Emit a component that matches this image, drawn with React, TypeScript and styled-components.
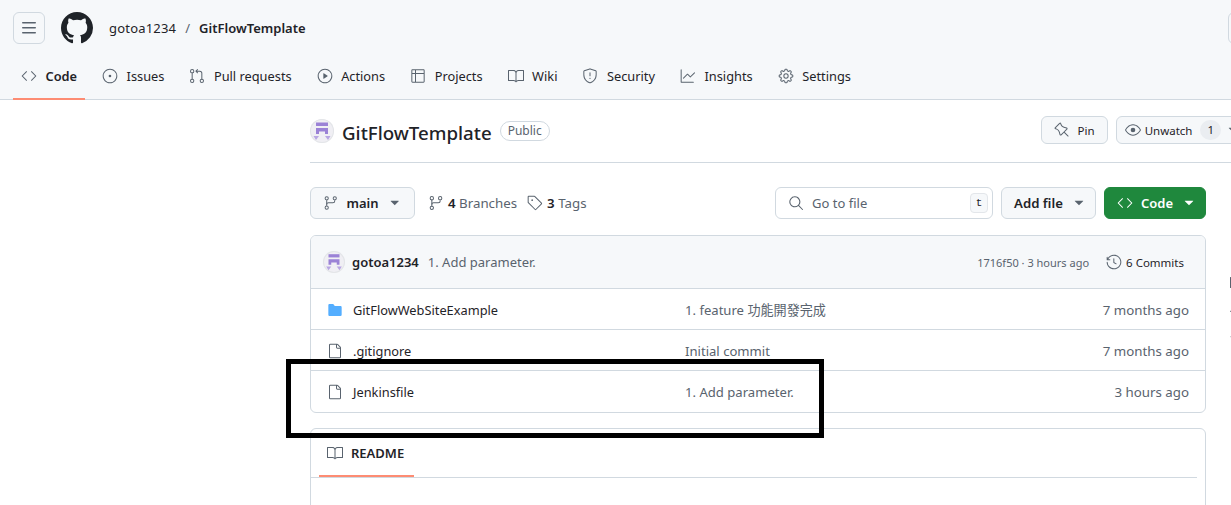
import { ReactNode } from "react";
import styled, { createGlobalStyle } from "styled-components";
import { BsGithub } from "react-icons/bs";
import {
  GoBook,
  GoCode,
  GoEye,
  GoFile,
  GoFileDirectoryFill,
  GoGear,
  GoGitBranch,
  GoGitPullRequest,
  GoGraph,
  GoHistory,
  GoIssueOpened,
  GoPin,
  GoPlay,
  GoPulse,
  GoSearch,
  GoShield,
  GoStar,
  GoTable,
  GoTag,
  GoTriangleDown,
} from "react-icons/go";

const GlobalStyle = createGlobalStyle`
  html, body {
    margin: 0;
    padding: 0;
    background: #fff;
    overflow: hidden;
  }
  body {
    font-family: "Noto Sans", "Noto Sans CJK TC", sans-serif;
    font-size: 13px;
    color: #1f2328;
  }
`;

const tabs: { label: string; icon: ReactNode; active?: boolean }[] = [
  { label: "Code", icon: <GoCode size={16} />, active: true },
  { label: "Issues", icon: <GoIssueOpened size={16} /> },
  { label: "Pull requests", icon: <GoGitPullRequest size={16} /> },
  { label: "Actions", icon: <GoPlay size={16} /> },
  { label: "Projects", icon: <GoTable size={16} /> },
  { label: "Wiki", icon: <GoBook size={16} /> },
  { label: "Security", icon: <GoShield size={16} /> },
  { label: "Insights", icon: <GoGraph size={16} /> },
  { label: "Settings", icon: <GoGear size={16} /> },
];

const files = [
  { name: "GitFlowWebSiteExample", dir: true, message: "1. feature 功能開發完成", age: "7 months ago" },
  { name: ".gitignore", dir: false, message: "Initial commit", age: "7 months ago" },
  { name: "Jenkinsfile", dir: false, message: "1. Add parameter.", age: "3 hours ago" },
];

const Identicon = ({ size }: { size: number }) => (
  <Avatar $size={size}>
    <svg viewBox="0 0 24 24" width={size} height={size}>
      <rect x="6" y="3.5" width="12" height="3.5" fill="#9b82d6" />
      <path d="M6 9h12v6h-3v-2.5H9V15H6z" fill="#9b82d6" />
      <path d="M3.5 17H9l-3 4zM15 17h5.5L18 21z" fill="#b8a6e3" />
    </svg>
  </Avatar>
);

const MenuIcon = () => (
  <svg viewBox="0 0 16 16" width={16} height={16} fill="currentColor">
    <path d="M1 2.75A.75.75 0 0 1 1.75 2h12.5a.75.75 0 0 1 0 1.5H1.75A.75.75 0 0 1 1 2.75Zm0 5A.75.75 0 0 1 1.75 7h12.5a.75.75 0 0 1 0 1.5H1.75A.75.75 0 0 1 1 7.75ZM1.75 12h12.5a.75.75 0 0 1 0 1.5H1.75a.75.75 0 0 1 0-1.5Z" />
  </svg>
);

export default function App() {
  return (
    <Page>
      <GlobalStyle />
      <Header>
        <TopRow>
          <MenuButton>
            <MenuIcon />
          </MenuButton>
          <Logo>
            <BsGithub size={32} />
          </Logo>
          <Crumbs>
            <Owner>gotoa1234</Owner>
            <Slash>/</Slash>
            <strong>GitFlowTemplate</strong>
          </Crumbs>
          <CornerButton />
        </TopRow>
        <TabBar>
          {tabs.map((tab) => (
            <Tab key={tab.label} $active={tab.active}>
              {tab.icon}
              <span>{tab.label}</span>
            </Tab>
          ))}
        </TabBar>
      </Header>

      <Main>
        <RepoHead>
          <RepoTitle>
            <Identicon size={24} />
            <RepoName>GitFlowTemplate</RepoName>
            <PublicBadge>Public</PublicBadge>
          </RepoTitle>
          <RepoActions>
            <SmallButton>
              <GoPin size={16} />
              Pin
            </SmallButton>
            <WatchButton>
              <GoEye size={16} />
              Unwatch
              <Count>1</Count>
              <GoTriangleDown size={16} />
            </WatchButton>
          </RepoActions>
        </RepoHead>

        <Body>
          <Column>
            <Toolbar>
              <BranchButton>
                <GoGitBranch size={16} />
                <strong>main</strong>
                <GoTriangleDown size={16} />
              </BranchButton>
              <RefLink>
                <GoGitBranch size={16} />
                <span>
                  <b>4</b> Branches
                </span>
              </RefLink>
              <RefLink>
                <GoTag size={16} />
                <span>
                  <b>3</b> Tags
                </span>
              </RefLink>
              <Spacer />
              <SearchBox>
                <GoSearch size={16} />
                <SearchText>Go to file</SearchText>
                <Kbd>t</Kbd>
              </SearchBox>
              <AddButton>
                Add file
                <GoTriangleDown size={16} />
              </AddButton>
              <GreenButton>
                <GoCode size={16} />
                Code
                <GoTriangleDown size={16} />
              </GreenButton>
            </Toolbar>

            <FileTable>
              <CommitRow>
                <Identicon size={22} />
                <Author>gotoa1234</Author>
                <CommitMessage>1. Add parameter.</CommitMessage>
                <Spacer />
                <CommitMeta>1716f50 · 3 hours ago</CommitMeta>
                <Commits>
                  <GoHistory size={16} />
                  6 Commits
                </Commits>
              </CommitRow>
              {files.map((file) => (
                <FileRow key={file.name}>
                  <FileName>
                    <FileIcon $dir={file.dir}>
                      {file.dir ? <GoFileDirectoryFill size={16} /> : <GoFile size={16} />}
                    </FileIcon>
                    {file.name}
                  </FileName>
                  <FileMessage>{file.message}</FileMessage>
                  <FileAge>{file.age}</FileAge>
                </FileRow>
              ))}
            </FileTable>

            <Readme>
              <ReadmeTabs>
                <ReadmeTab>
                  <GoBook size={16} />
                  README
                </ReadmeTab>
              </ReadmeTabs>
            </Readme>
          </Column>

          <Sidebar>
            <GoBook size={16} />
            <GoPulse size={16} />
            <GoStar size={16} />
          </Sidebar>
        </Body>
      </Main>

      <Highlight />
    </Page>
  );
}

const Page = styled.div`
  position: relative;
  width: 1231px;
  height: 505px;
  overflow: hidden;
  background: #fff;
`;

const Header = styled.header`
  height: 100px;
  box-sizing: border-box;
  background: #f6f8fa;
  border-bottom: 1px solid #d1d9e0;
`;

const TopRow = styled.div`
  display: flex;
  align-items: center;
  height: 56px;
  padding-left: 13px;
`;

const MenuButton = styled.div`
  display: flex;
  align-items: center;
  justify-content: center;
  width: 32px;
  height: 32px;
  box-sizing: border-box;
  color: #59636e;
  border: 1px solid #d1d9e0;
  border-radius: 6px;
`;

const Logo = styled.div`
  display: flex;
  margin-left: 16px;
  color: #1f2328;
`;

const Crumbs = styled.div`
  display: flex;
  align-items: center;
  margin-left: 16px;
  font-size: 13px;
  strong {
    font-weight: 600;
  }
`;

const Owner = styled.span`
  letter-spacing: 0.2px;
`;

const Slash = styled.span`
  margin: 0 9px;
  color: #59636e;
`;

const CornerButton = styled.div`
  flex: none;
  width: 32px;
  height: 32px;
  box-sizing: border-box;
  margin-left: auto;
  margin-right: -29px;
  border: 1px solid #d1d9e0;
  border-radius: 6px;
`;

const TabBar = styled.nav`
  display: flex;
  height: 43px;
  padding-left: 13px;
  gap: 9px;
`;

const Tab = styled.div<{ $active?: boolean }>`
  display: flex;
  align-items: center;
  gap: 8.5px;
  padding: 0 8px 2px;
  height: 44px;
  box-sizing: border-box;
  font-size: 12.8px;
  font-weight: ${(p) => (p.$active ? 600 : 400)};
  color: #1f2328;
  border-bottom: 2px solid ${(p) => (p.$active ? "#fd8c73" : "transparent")};
  svg {
    color: #59636e;
  }
`;

const Main = styled.main`
  padding-left: 310px;
`;

const RepoHead = styled.div`
  display: flex;
  align-items: center;
  justify-content: space-between;
  height: 63px;
  box-sizing: border-box;
  width: 921px;
  border-bottom: 1px solid #d1d9e0;
`;

const RepoTitle = styled.div`
  display: flex;
  align-items: center;
`;

const Avatar = styled.span<{ $size: number }>`
  display: inline-flex;
  flex: none;
  width: ${(p) => p.$size}px;
  height: ${(p) => p.$size}px;
  border-radius: 50%;
  overflow: hidden;
  background: #f0eff4;
  box-shadow: inset 0 0 0 1px #e3e5e8;
`;

const RepoName = styled.div`
  margin: 3px 0 0 8px;
  font-size: 18.7px;
  font-weight: 500;
`;

const PublicBadge = styled.span`
  margin-left: 8px;
  padding: 0 7px;
  height: 20px;
  line-height: 18px;
  box-sizing: border-box;
  font-size: 12px;
  color: #59636e;
  border: 1px solid #d1d9e0;
  border-radius: 10px;
`;

const RepoActions = styled.div`
  display: flex;
  gap: 8px;
  flex: none;
  margin: 0 -19px 2px 0;
`;

const SmallButton = styled.div`
  display: flex;
  align-items: center;
  gap: 8px;
  height: 28px;
  box-sizing: border-box;
  padding: 0 12px;
  font-size: 11.5px;
  background: #f6f8fa;
  border: 1px solid #d1d9e0;
  border-radius: 6px;
  svg {
    color: #59636e;
  }
`;

const WatchButton = styled(SmallButton)`
  gap: 4px;
  padding: 0 8px;
`;

const Count = styled.span`
  padding: 0 7px;
  line-height: 20px;
  margin-left: 4px;
  background: #eaedf1;
  border-radius: 10px;
`;

const Body = styled.div`
  display: flex;
  gap: 24px;
  margin-top: 24px;
`;

const Column = styled.div`
  flex: none;
  width: 896px;
`;

const Toolbar = styled.div`
  display: flex;
  align-items: center;
  gap: 8px;
  height: 32px;
`;

const Spacer = styled.div`
  flex: 1;
`;

const BaseButton = styled.div`
  display: flex;
  align-items: center;
  height: 32px;
  box-sizing: border-box;
  padding: 0 8px 0 12px;
  font-size: 13px;
  background: #f6f8fa;
  border: 1px solid #d1d9e0;
  border-radius: 6px;
  strong {
    font-weight: 600;
  }
  svg {
    color: #59636e;
  }
`;

const BranchButton = styled(BaseButton)`
  gap: 8px;
  width: 105px;
  padding: 0 12px;
  justify-content: space-between;
`;

const RefLink = styled.div`
  display: flex;
  align-items: center;
  gap: 4px;
  margin-left: 5px;
  color: #59636e;
  font-size: 13.3px;
  b {
    color: #1f2328;
    font-weight: 600;
  }
  & + & {
    margin-left: 2px;
  }
`;

const SearchBox = styled.div`
  display: flex;
  align-items: center;
  width: 218px;
  height: 32px;
  box-sizing: border-box;
  padding: 0 4px 0 12px;
  color: #59636e;
  border: 1px solid #d1d9e0;
  border-radius: 6px;
`;

const SearchText = styled.span`
  flex: 1;
  margin-left: 8px;
  font-size: 13px;
`;

const Kbd = styled.kbd`
  width: 16px;
  height: 18px;
  line-height: 18px;
  text-align: center;
  font-family: "Liberation Mono", monospace;
  font-size: 11px;
  color: #1f2328;
  background: #f6f8fa;
  border: 1px solid #e3e6ea;
  border-radius: 4px;
`;

const AddButton = styled(BaseButton)`
  gap: 8px;
  font-size: 13.2px;
  font-weight: 600;
`;

const GreenButton = styled(BaseButton)`
  gap: 8px;
  font-weight: 600;
  color: #fff;
  background: #1f883d;
  border-color: #1f883d;
  svg {
    color: #fff;
  }
`;

const FileTable = styled.div`
  margin-top: 16px;
  border: 1px solid #d1d9e0;
  border-radius: 6px;
  overflow: hidden;
`;

const CommitRow = styled.div`
  display: flex;
  align-items: center;
  height: 53px;
  box-sizing: border-box;
  padding: 0 21px 0 12px;
  background: #f6f8fa;
  border-bottom: 1px solid #d1d9e0;
`;

const Author = styled.span`
  margin-left: 7px;
  font-size: 13px;
  font-weight: 600;
`;

const CommitMessage = styled.span`
  margin-left: 9px;
  font-size: 13px;
  color: #59636e;
`;

const CommitMeta = styled.span`
  font-size: 11px;
  color: #59636e;
`;

const Commits = styled.span`
  display: flex;
  align-items: center;
  gap: 4px;
  margin-left: 17px;
  font-size: 11.5px;
  svg {
    color: #59636e;
  }
`;

const FileRow = styled.div`
  display: grid;
  grid-template-columns: 358px 1fr auto;
  align-items: center;
  height: 41px;
  box-sizing: border-box;
  padding: 1px 16px 0;
  font-size: 13px;
  border-bottom: 1px solid #d1d9e0;
  &:last-child {
    padding-top: 0;
    border-bottom: 0;
  }
`;

const FileName = styled.div`
  display: flex;
  align-items: center;
  gap: 10px;
  font-size: 12.8px;
`;

const FileIcon = styled.span<{ $dir: boolean }>`
  display: flex;
  color: ${(p) => (p.$dir ? "#54aeff" : "#59636e")};
`;

const FileMessage = styled.div`
  font-size: 13.1px;
  color: #59636e;
`;

const FileAge = styled.div`
  font-size: 13.3px;
  color: #59636e;
`;

const Readme = styled.div`
  margin-top: 15px;
  height: 100px;
  border: 1px solid #d1d9e0;
  border-radius: 6px;
`;

const ReadmeTabs = styled.div`
  height: 48px;
  margin-right: 8px;
  padding-left: 8px;
  border-bottom: 1px solid #d1d9e0;
`;

const ReadmeTab = styled.div`
  display: flex;
  align-items: center;
  gap: 8px;
  width: 95px;
  height: 48px;
  box-sizing: border-box;
  padding: 2px 0 0 8px;
  font-size: 13px;
  font-weight: 600;
  border-bottom: 2px solid #fd8c73;
  svg {
    color: #59636e;
  }
`;

const Sidebar = styled.aside`
  display: flex;
  flex-direction: column;
  flex: none;
  gap: 12px;
  width: 296px;
  margin-top: 88px;
  color: #59636e;
`;

const Highlight = styled.div`
  position: absolute;
  left: 286px;
  top: 359px;
  width: 538px;
  height: 79px;
  box-sizing: border-box;
  border: 5px solid #000;
`;
